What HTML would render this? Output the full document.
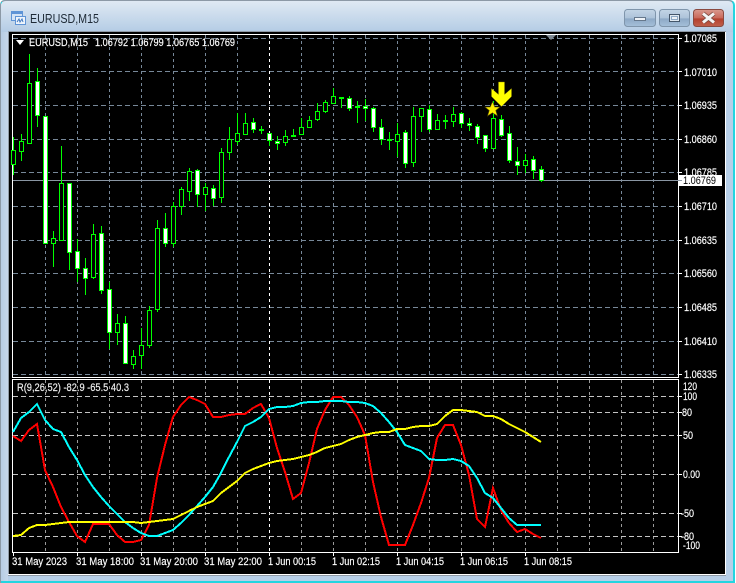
<!DOCTYPE html>
<html><head><meta charset="utf-8"><title>EURUSD,M15</title>
<style>html,body{margin:0;padding:0;background:#fff}svg{display:block}text{font-family:"Liberation Sans",sans-serif;font-size:11px;fill:#fff;stroke:#fff;stroke-width:.18px}</style></head>
<body>
<svg width="736" height="583" viewBox="0 0 736 583" xmlns="http://www.w3.org/2000/svg">
<defs>
<linearGradient id="ti" x1="0" y1="0" x2="0" y2="1"><stop offset="0" stop-color="#dfe9f3"/><stop offset="1" stop-color="#b4cce5"/></linearGradient>
<linearGradient id="bt" x1="0" y1="0" x2="0" y2="1"><stop offset="0" stop-color="#c3d5e6"/><stop offset=".5" stop-color="#adc3d9"/><stop offset=".55" stop-color="#8ea9c6"/><stop offset="1" stop-color="#a5c0da"/></linearGradient>
<linearGradient id="cl" x1="0" y1="0" x2="0" y2="1"><stop offset="0" stop-color="#d99a8e"/><stop offset=".5" stop-color="#c9685a"/><stop offset=".55" stop-color="#b4402e"/><stop offset="1" stop-color="#c0604c"/></linearGradient>
<linearGradient id="lf" x1="0" y1="0" x2="1" y2="0"><stop offset="0" stop-color="#b7cce4"/><stop offset="1" stop-color="#c6d7ea"/></linearGradient>
</defs>
<path d="M5 0H729Q735 0 735 6V583H0V6Q0 0 5 0Z" fill="#23d5e0"/>
<path d="M5 0H729Q733 0 733 4V2H1V583H0V6Q0 0 5 0Z" fill="#8c99a6"/>
<path d="M6 1H728Q733 1 733 6V581H1V6Q1 1 6 1Z" fill="#b7cfe8"/>
<path d="M6 1H728Q733 1 733 6V32H1V6Q1 1 6 1Z" fill="url(#ti)"/>
<rect x="1" y="32" width="7" height="549" fill="url(#lf)"/>
<rect x="8" y="31" width="718" height="545" fill="#8f9aa6"/>
<rect x="9" y="32" width="716" height="542" fill="#000"/>
<rect x="8" y="574" width="718" height="1" fill="#fff"/>
<rect x="725" y="32" width="1" height="543" fill="#fff"/>

<!-- window icon -->
<g shape-rendering="crispEdges"><rect x="11.500" y="11.500" width="11" height="9" fill="#d4e3f5" stroke="#5f94d6"/><rect x="12" y="12" width="10" height="2" fill="#5f94d6"/><rect x="15.500" y="16.500" width="10" height="8" fill="#eef4fb" stroke="#5f94d6"/></g>
<path d="M17 22l2-3 1 3 2-3 1 3" fill="none" stroke="#3f78c0"/>
<text x="30" y="23" textLength="69" lengthAdjust="spacingAndGlyphs" style="fill:#1e2a36;stroke:none;font-size:13px">EURUSD,M15</text>

<!-- buttons -->
<rect x="624.500" y="9.500" width="31" height="17" rx="3" fill="url(#bt)" stroke="#7f95ab"/>
<rect x="659.500" y="9.500" width="30" height="17" rx="3" fill="url(#bt)" stroke="#7f95ab"/>
<rect x="693.500" y="9.500" width="30" height="17" rx="3" fill="url(#cl)" stroke="#8a4a40"/>
<rect x="634.500" y="17.500" width="11" height="3" fill="#eef2f6" stroke="#66788c"/>
<rect x="669.500" y="14.500" width="10" height="7" fill="#dfe8f0" stroke="#44566a"/><rect x="671" y="16" width="7" height="4" fill="#8ea9c6"/><rect x="672" y="17" width="5" height="2" fill="#eef2f6"/>
<path d="M703 13.500L714 22.500M714 13.500L703 22.500" stroke="#7d4a40" stroke-width="4.500"/>
<path d="M703 13.500L714 22.500M714 13.500L703 22.500" stroke="#f4f4f4" stroke-width="3"/>

<!-- grid -->
<g shape-rendering="crispEdges" fill="none">
<path stroke="#778899" stroke-dasharray="3 3" d="M45.500 35V377M77.500 35V377M109.500 35V377M141.500 35V377M173.500 35V377M205.500 35V377M237.500 35V377M301.500 35V377M333.500 35V377M365.500 35V377M397.500 35V377M429.500 35V377M461.500 35V377M493.500 35V377M525.500 35V377M557.500 35V377M589.500 35V377M621.500 35V377M653.500 35V377"/>
<path stroke="#778899" stroke-dasharray="5 3" d="M13 38.500H678M13 71.500H678M13 105.500H678M13 139.500H678M13 172.500H678M13 206.500H678M13 240.500H678M13 273.500H678M13 307.500H678M13 341.500H678M13 374.500H678"/>
<path stroke="#fff" stroke-dasharray="3 3" d="M269.500 35V377M269.500 380V552"/>
<path stroke="#9a9a9a" stroke-dasharray="3 3" d="M45.500 380V552M77.500 380V552M109.500 380V552M141.500 380V552M173.500 380V552M205.500 380V552M237.500 380V552M301.500 380V552M333.500 380V552M365.500 380V552M397.500 380V552M429.500 380V552M461.500 380V552M493.500 380V552M525.500 380V552M557.500 380V552M589.500 380V552M621.500 380V552M653.500 380V552"/>
<path stroke="#c4c4c4" stroke-dasharray="5 3" d="M13 396.500H678M13 412.500H678M13 435.500H678M13 474.500H678M13 513.500H678M13 536.500H678"/>
<path stroke="#8a96a3" d="M13 180.500H678"/>
<path stroke="#fff" d="M12.500 34.500H678.500V377.500H12.500ZM12.500 379.500H678.500V552.500H12.500Z"/>
<path stroke="#fff" d="M678 38.500H682M678 71.500H682M678 105.500H682M678 139.500H682M678 172.500H682M678 206.500H682M678 240.500H682M678 273.500H682M678 307.500H682M678 341.500H682M678 374.500H682M678 396.500H682M678 412.500H682M678 435.500H682M678 474.500H682M678 513.500H682M678 536.500H682M13.500 552V556M77.500 552V556M141.500 552V556M205.500 552V556M269.500 552V556M333.500 552V556M397.500 552V556M461.500 552V556M525.500 552V556"/>
</g>

<!-- wicks -->
<path fill="none" stroke="#00ff00" stroke-width="1" d="M13.500 137V175M21.500 134V161M29.500 54V144M37.500 68V127M53.500 231V267M61.500 146V240M69.500 183V270M77.500 239V282M85.500 258V295M93.500 224V279M101.500 226V294M109.500 282V349M117.500 314V345M125.500 316V363M133.500 350V369M141.500 328V369M149.500 306V348M157.500 220V312M165.500 213V247M173.500 202V247M181.500 187V215M189.500 168V201M197.500 169V207M205.500 183V211M213.500 185V206M221.500 148V203M229.500 127V160M237.500 113V145M245.500 113V134M253.500 118V133M261.500 126V134M269.500 133V146M277.500 136V150M285.500 130V146M293.500 129V137M301.500 118V134M309.500 116V128M317.500 103V121M325.500 100V113M333.500 88V104M341.500 97V108M349.500 96V111M357.500 101V123M365.500 99V121M373.500 107V132M381.500 119V145M389.500 132V150M397.500 123V157M405.500 130V168M413.500 107V167M421.500 108V132M429.500 105V132M437.500 114V129M445.500 115V129M453.500 107V127M461.500 112V128M469.500 118V131M477.500 124V144M485.500 135V152M493.500 101V148M501.500 115V137M509.500 126V163M517.500 147V175M525.500 154V173M533.500 156V179M541.500 166V182"/>
<!-- bullish bodies -->
<g fill="#000" stroke="#00ff00" stroke-width="1">
<rect x="11.500" y="150.500" width="4" height="14"/><rect x="19.500" y="141.500" width="4" height="10"/><rect x="27.500" y="83.500" width="4" height="60"/><rect x="51.500" y="238.500" width="4" height="5"/><rect x="59.500" y="183.500" width="4" height="57"/><rect x="91.500" y="234.500" width="4" height="43"/><rect x="115.500" y="323.500" width="4" height="9"/><rect x="131.500" y="356.500" width="4" height="8"/><rect x="139.500" y="345.500" width="4" height="10"/><rect x="147.500" y="310.500" width="4" height="35"/><rect x="155.500" y="228.500" width="4" height="81"/><rect x="171.500" y="206.500" width="4" height="37"/><rect x="179.500" y="189.500" width="4" height="17"/><rect x="187.500" y="171.500" width="4" height="20"/><rect x="203.500" y="187.500" width="4" height="7"/><rect x="219.500" y="152.500" width="4" height="45"/><rect x="227.500" y="139.500" width="4" height="13"/><rect x="235.500" y="133.500" width="4" height="8"/><rect x="243.500" y="123.500" width="4" height="11"/><rect x="259.500" y="129.500" width="4" height="1"/><rect x="283.500" y="136.500" width="4" height="6"/><rect x="291.500" y="135.500" width="4" height="1"/><rect x="299.500" y="127.500" width="4" height="7"/><rect x="307.500" y="120.500" width="4" height="7"/><rect x="315.500" y="111.500" width="4" height="8"/><rect x="323.500" y="102.500" width="4" height="9"/><rect x="331.500" y="96.500" width="4" height="7"/><rect x="339.500" y="97.500" width="4" height="1"/><rect x="355.500" y="106.500" width="4" height="1"/><rect x="387.500" y="139.500" width="4" height="1"/><rect x="395.500" y="134.500" width="4" height="7"/><rect x="411.500" y="116.500" width="4" height="46"/><rect x="419.500" y="108.500" width="4" height="8"/><rect x="435.500" y="120.500" width="4" height="9"/><rect x="443.500" y="120.500" width="4" height="1"/><rect x="451.500" y="114.500" width="4" height="7"/><rect x="491.500" y="118.500" width="4" height="30"/><rect x="523.500" y="160.500" width="4" height="5"/>
</g>
<!-- bearish bodies -->
<g fill="#fff" stroke="#00ff00" stroke-width="1">
<rect x="35.500" y="81.500" width="4" height="34"/><rect x="43.500" y="116.500" width="4" height="127"/><rect x="67.500" y="183.500" width="4" height="69"/><rect x="75.500" y="251.500" width="4" height="17"/><rect x="83.500" y="268.500" width="4" height="10"/><rect x="99.500" y="233.500" width="4" height="57"/><rect x="107.500" y="289.500" width="4" height="43"/><rect x="123.500" y="323.500" width="4" height="40"/><rect x="163.500" y="228.500" width="4" height="15"/><rect x="195.500" y="170.500" width="4" height="24"/><rect x="211.500" y="188.500" width="4" height="10"/><rect x="251.500" y="122.500" width="4" height="7"/><rect x="267.500" y="133.500" width="4" height="7"/><rect x="275.500" y="141.500" width="4" height="2"/><rect x="347.500" y="98.500" width="4" height="10"/><rect x="363.500" y="106.500" width="4" height="2"/><rect x="371.500" y="108.500" width="4" height="19"/><rect x="379.500" y="127.500" width="4" height="12"/><rect x="403.500" y="132.500" width="4" height="31"/><rect x="427.500" y="109.500" width="4" height="20"/><rect x="459.500" y="113.500" width="4" height="10"/><rect x="467.500" y="123.500" width="4" height="2"/><rect x="475.500" y="126.500" width="4" height="11"/><rect x="483.500" y="135.500" width="4" height="13"/><rect x="499.500" y="119.500" width="4" height="16"/><rect x="507.500" y="133.500" width="4" height="27"/><rect x="515.500" y="161.500" width="4" height="4"/><rect x="531.500" y="159.500" width="4" height="11"/><rect x="539.500" y="169.500" width="4" height="11"/>
</g>

<!-- indicator lines -->
<g shape-rendering="crispEdges" fill="none">
<polyline stroke="#ff0000" stroke-width="2" points="13,436 21,441 29,430 37,424 45,470 53,487 61,507 69,522 77,536 85,542 93,524 101,524 109,524 117,535 125,542 133,542 141,540 149,525 157,478 165,445 173,417 181,405 189,397 197,400 205,404 213,417 221,417 229,415 237,414 245,414 253,408 261,404 269,418 277,448 285,472 293,499 301,493 309,463 317,429 325,410 333,397 341,397 349,405 357,417 365,435 373,482 381,517 389,545 397,545 405,545 413,525 421,503 429,478 437,438 445,425 453,425 461,445 469,475 477,519 485,527 493,488 501,510 509,523 517,532 525,529 533,534 541,538"/>
<polyline stroke="#00ffff" stroke-width="2" points="13,432 21,418 29,412 37,404 45,420 53,429 61,432 69,447 77,460 85,475 93,487 101,497 109,506 117,514 125,522 133,528 141,533 149,536 157,536 165,533 173,530 181,523 189,515 197,506 205,497 213,487 221,473 229,457 237,442 245,426 253,422 261,417 269,409 277,407 285,407 293,406 301,403 309,402 317,402 325,401 333,401 341,401 349,402 357,402 365,403 373,406 381,413 389,422 397,432 405,445 413,448 421,451 429,459 437,460 445,460 453,459 461,461 469,466 477,478 485,493 493,498 501,508 509,518 517,525 525,525 533,525 541,525"/>
<polyline stroke="#ffff00" stroke-width="2" points="13,536 21,535 29,528 37,525 45,525 53,524 61,523 69,522 77,522 133,522 141,523 149,522 157,521 165,520 173,519 181,515 189,511 197,507 205,504 213,501 221,493 229,487 237,481 245,473 253,469 261,466 269,463 277,461 285,460 293,459 301,457 309,455 317,452 325,448 333,446 341,444 349,440 357,437 365,435 373,433 381,432 389,432 397,429 405,429 413,427 421,426 429,426 437,424 445,416 453,410 461,410 469,411 477,412 485,416 493,416 501,419 509,424 517,428 525,432 533,437 541,442"/>
</g>

<!-- star & arrow -->
<path d="M492.500 101.500L494.800 107H500L495.800 110.500L497.500 116L492.500 112.800L487.500 116L489.200 110.500L485 107H490.200Z" fill="#ffee00" stroke="#4d4300" stroke-width=".6"/>
<path d="M498.500 82H504.500V94.500L511.500 88.500V96.500L501.500 106.500L491.500 96.500V88.500L498.500 94.500Z" fill="#ffff00" stroke="#8a8200" stroke-width=".4"/>

<!-- markers -->
<path d="M16 40H24L20 45Z" fill="#fff"/>
<path d="M546 35H556L551 40Z" fill="#808a94"/>

<!-- header -->
<text x="29" y="46" textLength="59" lengthAdjust="spacingAndGlyphs">EURUSD,M15</text>
<text x="95" y="46" textLength="140" lengthAdjust="spacingAndGlyphs">1.06792 1.06799 1.06765 1.06769</text>
<text x="17" y="391" textLength="112" lengthAdjust="spacingAndGlyphs" style="fill:#e8e8e8">R(9,26,52) -82.9 -65.5 40.3</text>

<!-- price axis -->
<g>
<text x="684" y="42" textLength="33" lengthAdjust="spacingAndGlyphs">1.07085</text>
<text x="684" y="76" textLength="33" lengthAdjust="spacingAndGlyphs">1.07010</text>
<text x="684" y="109" textLength="33" lengthAdjust="spacingAndGlyphs">1.06935</text>
<text x="684" y="143" textLength="33" lengthAdjust="spacingAndGlyphs">1.06860</text>
<text x="684" y="176" textLength="33" lengthAdjust="spacingAndGlyphs">1.06785</text>
<text x="684" y="210" textLength="33" lengthAdjust="spacingAndGlyphs">1.06710</text>
<text x="684" y="244" textLength="33" lengthAdjust="spacingAndGlyphs">1.06635</text>
<text x="684" y="277" textLength="33" lengthAdjust="spacingAndGlyphs">1.06560</text>
<text x="684" y="311" textLength="33" lengthAdjust="spacingAndGlyphs">1.06485</text>
<text x="684" y="345" textLength="33" lengthAdjust="spacingAndGlyphs">1.06410</text>
<text x="684" y="378" textLength="33" lengthAdjust="spacingAndGlyphs">1.06335</text>
</g>
<rect x="679" y="175" width="43" height="11" fill="#fff"/>
<path d="M678 180.500H682" stroke="#8a96a3"/>
<text x="683" y="184" textLength="33" lengthAdjust="spacingAndGlyphs" style="fill:#000;stroke:none">1.06769</text>

<!-- indicator axis -->
<text x="683" y="390" textLength="14" lengthAdjust="spacingAndGlyphs">120</text>
<text x="683" y="400" textLength="14" lengthAdjust="spacingAndGlyphs">100</text>
<text x="682" y="416" textLength="10" lengthAdjust="spacingAndGlyphs">80</text>
<text x="683" y="439" textLength="10" lengthAdjust="spacingAndGlyphs">50</text>
<text x="683" y="478" textLength="17" lengthAdjust="spacingAndGlyphs">0.00</text>
<text x="681" y="517" textLength="13" lengthAdjust="spacingAndGlyphs">-50</text>
<text x="681" y="540" textLength="13" lengthAdjust="spacingAndGlyphs">-80</text>
<text x="683" y="549" textLength="17" lengthAdjust="spacingAndGlyphs">-100</text>

<!-- time axis -->
<text x="12" y="565" textLength="55" lengthAdjust="spacingAndGlyphs">31 May 2023</text>
<text x="76" y="565" textLength="58" lengthAdjust="spacingAndGlyphs">31 May 18:00</text>
<text x="140" y="565" textLength="58" lengthAdjust="spacingAndGlyphs">31 May 20:00</text>
<text x="204" y="565" textLength="58" lengthAdjust="spacingAndGlyphs">31 May 22:00</text>
<text x="268" y="565" textLength="48" lengthAdjust="spacingAndGlyphs">1 Jun 00:15</text>
<text x="332" y="565" textLength="48" lengthAdjust="spacingAndGlyphs">1 Jun 02:15</text>
<text x="396" y="565" textLength="48" lengthAdjust="spacingAndGlyphs">1 Jun 04:15</text>
<text x="460" y="565" textLength="48" lengthAdjust="spacingAndGlyphs">1 Jun 06:15</text>
<text x="524" y="565" textLength="48" lengthAdjust="spacingAndGlyphs">1 Jun 08:15</text>
</svg>
</body></html>
